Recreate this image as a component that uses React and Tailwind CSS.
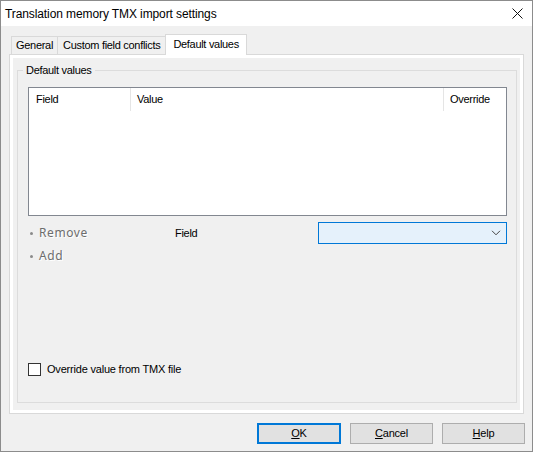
import React from "react";

const ui = { fontFamily: '"Liberation Sans", Arial, sans-serif' };
const seg = { fontFamily: '"Noto Sans", "Open Sans", sans-serif' };

export default function App() {
  return (
    <div className="w-[533px] h-[452px] border border-[#8c8c8c] bg-[#f0f0f0] flex flex-col text-black select-none" style={ui}>
      {/* Title bar */}
      <div className="h-[25px] bg-white flex items-center justify-between pl-[4px] pr-[9px]">
        <span className="text-[12px] tracking-[-0.1px]">Translation memory TMX import settings</span>
        <svg width="11" height="11" viewBox="0 0 11 11">
          <path d="M0.5 0.5 L10.5 10.5 M10.5 0.5 L0.5 10.5" stroke="#111" strokeWidth="1" fill="none" />
        </svg>
      </div>

      {/* Body */}
      <div className="flex-1 flex flex-col px-[8px] pt-[8px]">
        {/* Tabs */}
        <div className="h-[20px] flex items-end pl-[2px] text-[11px] tracking-[-0.3px]">
          <div className="h-[18px] px-[4px] border border-b-0 border-[#d9d9d9] bg-[#f0f0f0] flex items-center">General</div>
          <div className="h-[18px] px-[5px] border border-l-0 border-b-0 border-[#d9d9d9] bg-[#f0f0f0] flex items-center">Custom field conflicts</div>
          <div className="relative z-10 -ml-[1px] -mb-px h-[21px] px-[7px] border border-b-0 border-[#d9d9d9] bg-white flex items-center pb-[2px]">Default values</div>
        </div>

        {/* Tab panel */}
        <div className="h-[360px] border border-[#d9d9d9] bg-white p-[3px] flex">
          <div className="flex-1 bg-[#f0f0f0] pl-[4px] pr-[3px] pt-[12px] pb-[7px] flex">
            {/* Group box */}
            <div className="relative flex-1 border border-[#dcdcdc] flex flex-col pl-[10px] pr-[9px] pt-[16px] pb-[26px]">
              <span className="absolute -top-[8px] left-[5px] px-[3px] bg-[#f0f0f0] text-[11px] tracking-[-0.3px] leading-[14px]">Default values</span>

              {/* List view */}
              <div className="h-[129px] border border-[#828790] bg-white">
                <div className="h-[23px] flex text-[11px] tracking-[-0.3px]">
                  <div className="w-[102px] border-r border-[#e5e5e5] flex items-center pl-[7px]">Field</div>
                  <div className="w-[313px] border-r border-[#e5e5e5] flex items-center pl-[6px]">Value</div>
                  <div className="flex-1 flex items-center pl-[6px]">Override</div>
                </div>
              </div>

              {/* Remove row */}
              <div className="mt-[6px] h-[22px] flex items-center">
                <div className="w-[147px] flex items-center pl-[2px] text-[12px] tracking-[0.6px] text-[#6d6d6d]" style={seg}>
                  <span className="w-[3px] h-[3px] rounded-full bg-[#8a8a8a] mr-[6px]" />
                  <span className="[text-shadow:1px_1px_0_#ffffff]">Remove</span>
                </div>
                <span className="w-[143px] text-[11px] tracking-[-0.3px]">Field</span>
                <div className="flex-1 h-[22px] border border-[#0078d7] bg-[#e5f1fb] flex items-center justify-end pr-[5px]">
                  <svg width="10" height="6" viewBox="0 0 10 6">
                    <path d="M1 0.8 L5 4.8 L9 0.8" stroke="#444" strokeWidth="1" fill="none" />
                  </svg>
                </div>
              </div>

              {/* Add row */}
              <div className="h-[24px] flex items-center pl-[2px] text-[12px] tracking-[0.6px] text-[#6d6d6d]" style={seg}>
                <span className="w-[3px] h-[3px] rounded-full bg-[#8a8a8a] mr-[6px]" />
                <span className="[text-shadow:1px_1px_0_#ffffff]">Add</span>
              </div>

              <div className="flex-1" />

              {/* Checkbox */}
              <div className="flex items-center h-[13px]">
                <div className="w-[13px] h-[13px] border border-[#333] bg-white" />
                <span className="ml-[6px] text-[11px] tracking-[-0.2px]">Override value from TMX file</span>
              </div>
            </div>
          </div>
        </div>

        {/* Buttons */}
        <div className="mt-[9px] h-[21px] flex justify-end -mr-[1px] gap-[9px] text-[11px] tracking-[-0.2px]">
          <button className="w-[84px] h-[21px] border-2 border-[#0078d7] bg-[#e1e1e1] flex items-center justify-center"><span><u>O</u>K</span></button>
          <button className="w-[83px] h-[21px] border border-[#adadad] bg-[#e1e1e1] flex items-center justify-center"><span><u>C</u>ancel</span></button>
          <button className="w-[83px] h-[21px] border border-[#adadad] bg-[#e1e1e1] flex items-center justify-center"><span><u>H</u>elp</span></button>
        </div>
      </div>
    </div>
  );
}
